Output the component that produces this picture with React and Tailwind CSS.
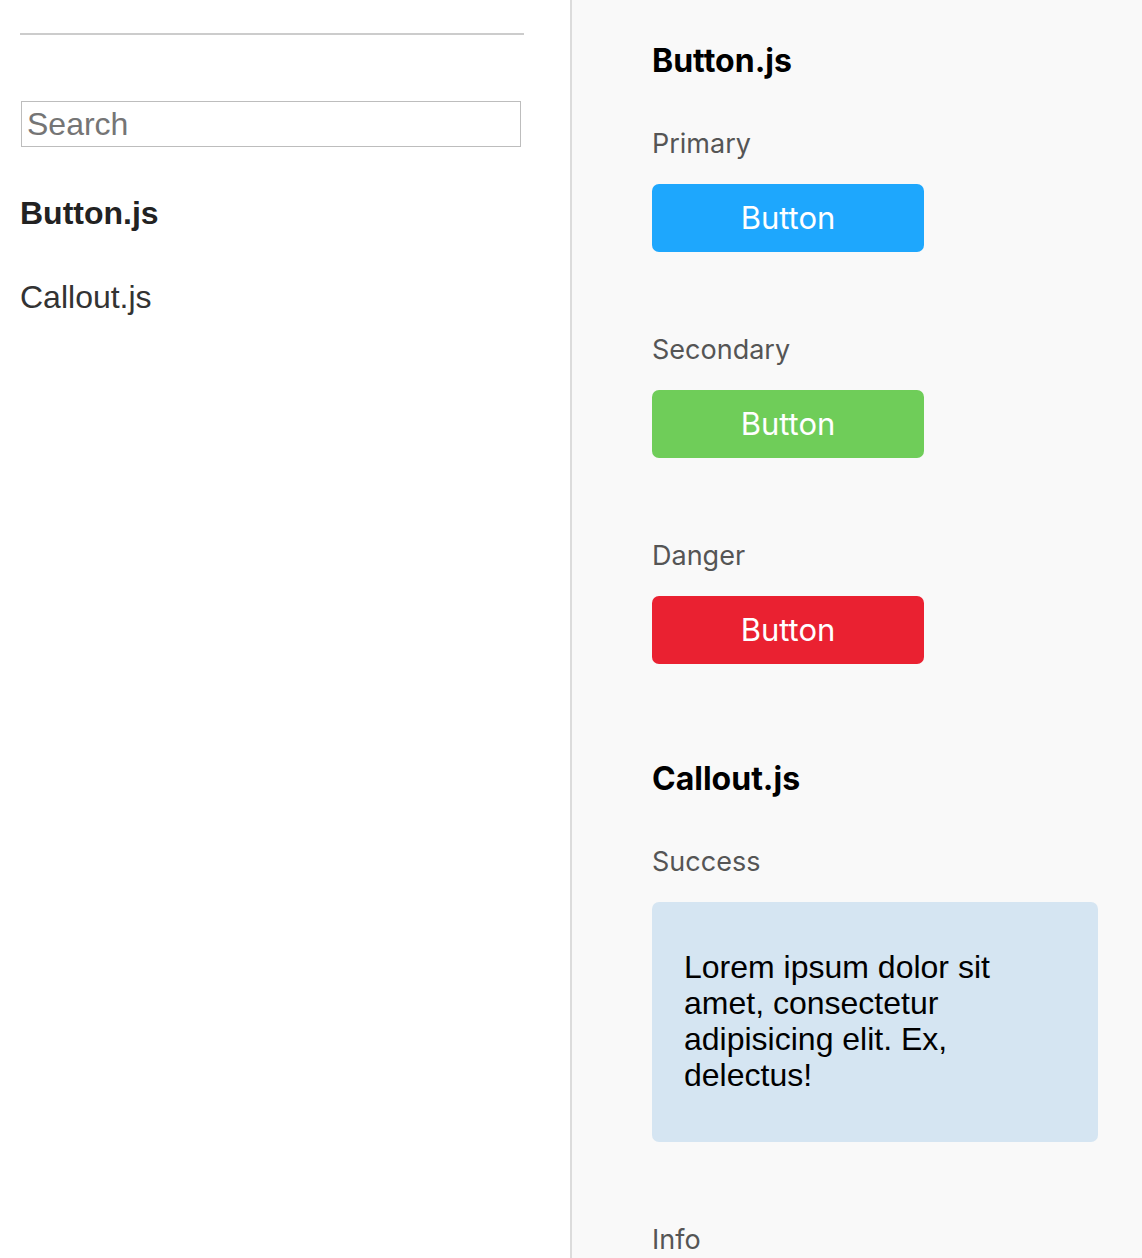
const buttons = [
  { label: "Primary", color: "bg-[#1ea7fd]", first: true },
  { label: "Secondary", color: "bg-[#6fcd59]", first: false },
  { label: "Danger", color: "bg-[#ea2131]", first: false },
];

function Label({ children, className = "" }) {
  return (
    <div className={`font-[Inter,sans-serif] text-[27px] leading-[32px] text-[#555] ${className}`}>
      {children}
    </div>
  );
}

function Heading({ children, className = "" }) {
  return (
    <h2 className={`font-[Inter,sans-serif] text-[32px] leading-[40px] font-bold text-black ${className}`}>
      {children}
    </h2>
  );
}

export default function App() {
  return (
    <div className="flex w-[1142px] h-[1258px] overflow-hidden">
      <aside className="w-[572px] shrink-0 bg-white border-r-2 border-[#dcdcdc] pl-[20px] pt-[33px] font-['Liberation_Sans',Arial,sans-serif]">
        <div className="w-[504px] h-[2px] bg-[#cccccc]" />
        <input
          type="text"
          placeholder="Search"
          className="mt-[66px] ml-[1px] block w-[500px] h-[46px] border border-[#bdbdbd] px-[5px] text-[32px] text-[#333] placeholder:text-[#757575] outline-none bg-white font-['Liberation_Sans',Arial,sans-serif]"
        />
        <div className="mt-[46px] text-[32px] leading-[40px] font-bold text-[#222]">Button.js</div>
        <div className="mt-[44px] text-[32px] leading-[40px] text-[#333]">Callout.js</div>
      </aside>
      <main className="flex-1 bg-[#f9f9f9] pl-[80px] pt-[41px]">
        <Heading>Button.js</Heading>
        {buttons.map((b) => (
          <div key={b.label} className={b.first ? "mt-[47px]" : "mt-[82px]"}>
            <Label>{b.label}</Label>
            <button
              className={`mt-[24px] w-[272px] h-[68px] rounded-[7px] ${b.color} text-white text-[31px] flex items-center justify-center font-[Inter,sans-serif]`}
            >
              Button
            </button>
          </div>
        ))}
        <Heading className="mt-[95px]">Callout.js</Heading>
        <Label className="mt-[47px]">Success</Label>
        <div className="mt-[24px] w-[446px] h-[240px] rounded-[7px] bg-[#d5e5f2] px-[32px] pt-[47px]">
          <p className="font-['Liberation_Sans',Arial,sans-serif] text-[32px] leading-[36px] text-black">
            Lorem ipsum dolor sit amet, consectetur adipisicing elit. Ex, delectus!
          </p>
        </div>
        <Label className="mt-[82px]">Info</Label>
      </main>
    </div>
  );
}
